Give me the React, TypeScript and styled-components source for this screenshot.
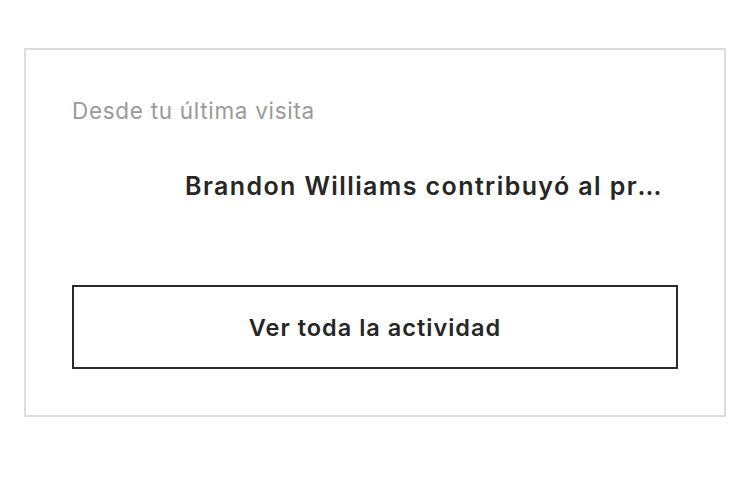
import {FC} from 'react';
import styled, {createGlobalStyle} from 'styled-components';

const GlobalStyle = createGlobalStyle`
  html, body {
    margin: 0;
    padding: 0;
    background: #fff;
  }
  body {
    font-family: Inter, "Noto Sans", "Liberation Sans", sans-serif;
    -webkit-font-smoothing: antialiased;
  }
`;

interface Activity {
  author: string;
  text: string;
}

const latest: Activity = {
  author: 'Brandon Williams',
  text: 'Brandon Williams contribuyó al proyecto "Rediseño del panel de control"',
};

const App: FC = () => (
  <>
    <GlobalStyle />
    <Page>
      <Card>
        <Label>Desde tu última visita</Label>
        <ActivityRow>
          <AvatarSlot aria-hidden />
          <Headline title={latest.text}>{latest.text}</Headline>
        </ActivityRow>
        <OutlineButton type="button">Ver toda la actividad</OutlineButton>
      </Card>
    </Page>
  </>
);

const Page = styled.div`
  padding: 48px 24px;
`;

const Card = styled.section`
  box-sizing: border-box;
  width: 702px;
  height: 369px;
  border: 2px solid #dddddd;
  padding: 46px;
  display: flex;
  flex-direction: column;
`;

const Label = styled.div`
  font-size: 22.5px;
  line-height: 29px;
  letter-spacing: 0.7px;
  color: #9a9a9a;
  font-weight: 400;
`;

const ActivityRow = styled.div`
  display: flex;
  align-items: center;
  gap: 17px;
  margin-top: 47px;
  padding-right: 10px;
  min-width: 0;
`;

const AvatarSlot = styled.span`
  flex: 0 0 96px;
  height: 29px;
`;

const Headline = styled.div`
  flex: 1;
  min-width: 0;
  font-size: 25px;
  line-height: 29px;
  letter-spacing: 1.4px;
  font-weight: 600;
  color: #262626;
  white-space: nowrap;
  overflow: hidden;
  text-overflow: ellipsis;
`;

const OutlineButton = styled.button`
  box-sizing: border-box;
  margin-top: 84px;
  width: 100%;
  height: 84px;
  border: 2px solid #2a2a2a;
  background: #fff;
  color: #262626;
  font-family: inherit;
  font-size: 23.5px;
  letter-spacing: 1px;
  font-weight: 600;
  cursor: pointer;
  padding: 0;
`;

export default App;
